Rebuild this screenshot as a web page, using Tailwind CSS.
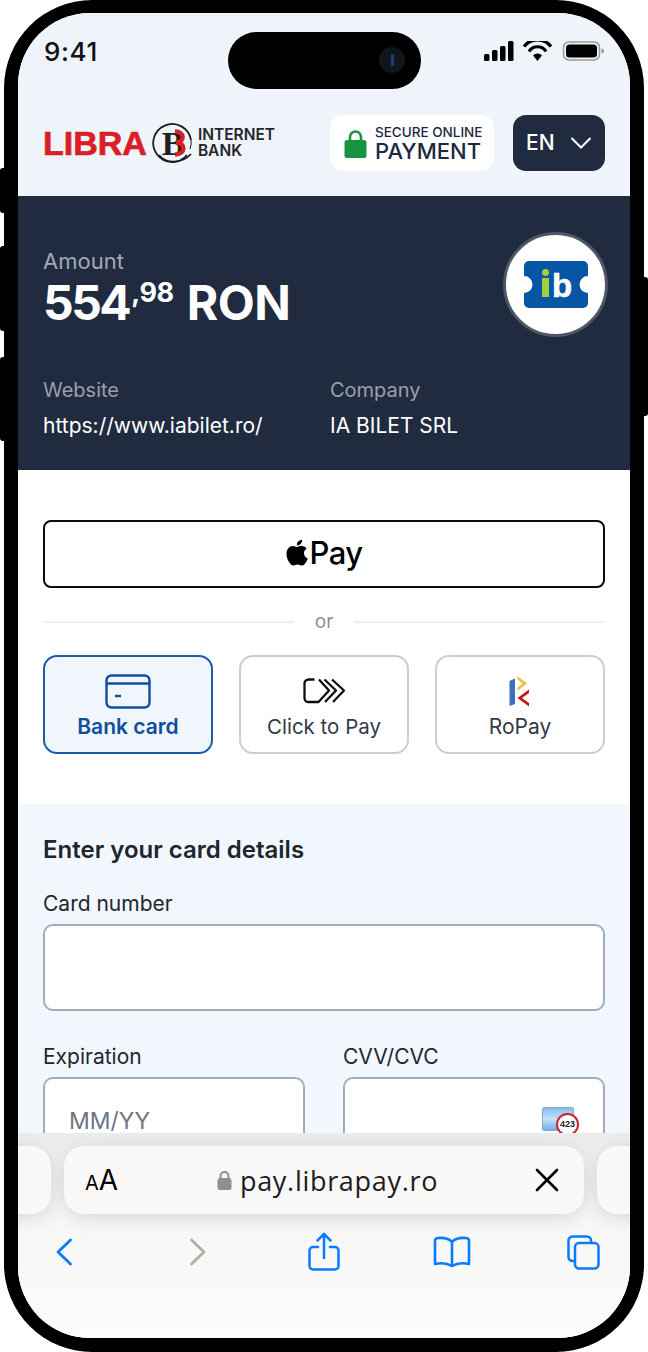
<!DOCTYPE html>
<html lang="en">
<head>
  <meta charset="UTF-8" />
  <meta name="viewport" content="width=device-width, initial-scale=1.0">
  <title>Libra Pay</title>
  <script src="https://cdn.jsdelivr.net/npm/@tailwindcss/browser@4"></script>
</head>
<body class="bg-white font-['Inter',sans-serif]">
  <div class="relative w-[648px] h-[1352px] overflow-hidden bg-white">
    <!-- side buttons -->
    <div class="absolute left-0 top-[168px] w-[6px] h-[45px] bg-black rounded-l-[3px]"></div>
    <div class="absolute left-0 top-[246px] w-[6px] h-[85px] bg-black rounded-l-[3px]"></div>
    <div class="absolute left-0 top-[357px] w-[6px] h-[84px] bg-black rounded-l-[3px]"></div>
    <div class="absolute right-0 top-[277px] w-[6px] h-[139px] bg-black rounded-r-[3px]"></div>

    <!-- phone body -->
    <div class="absolute left-[4px] top-0 w-[640px] h-[1352px] bg-black rounded-[88px] pt-[13px] px-[14px]">
      <div class="relative w-[612px] h-[1325px] overflow-hidden rounded-[72px] bg-white">

        <!-- header -->
        <header class="h-[183px] bg-[#eff3fa] pt-[102px] pl-[25px] pr-[25px] flex items-start justify-between">
          <div class="flex items-center h-[56px]">
            <span class="font-['Liberation_Sans',sans-serif] font-bold text-[34px] leading-none text-[#d81f26] [-webkit-text-stroke:0.7px_#d81f26]">LIBRA</span>
            <svg class="ml-[5px]" width="42" height="42" viewBox="0 0 42 42">
              <path d="M35 33A19 19 0 1 1 39 18" fill="none" stroke="#1b1b1d" stroke-width="1.800"/>
              <path d="M39 18A19 19 0 0 1 38 27" fill="none" stroke="#1b1b1d" stroke-width="1"/>
              <path d="M7 33C14 42 30 42 39 32" fill="none" stroke="#1b1b1d" stroke-width="1.600"/>
              <text x="21" y="33" text-anchor="middle" font-family="Liberation Serif" font-weight="700" font-size="34" fill="#1f1f21">B</text>
              <path d="M23 9.500C33 9.500 33 20 24 20.500C34 21 34 32 23 32.500" fill="none" stroke="#d81f26" stroke-width="4.500"/>
            </svg>
            <div class="ml-[4px] text-[15.5px] leading-[16px] font-semibold text-[#26262a]">INTERNET<br>BANK</div>
          </div>
          <div class="flex items-center gap-[19px]">
            <div class="w-[164px] h-[56px] rounded-[13px] bg-white flex items-center pl-[14px]">
              <svg width="23" height="29" viewBox="0 0 23 29">
                <path d="M6 14V8a5.500 5.500 0 0 1 11 0v6" fill="none" stroke="#18933f" stroke-width="2.600"/>
                <rect x="0.500" y="11" width="22" height="18" rx="2.500" fill="#18933f"/>
              </svg>
              <div class="ml-[8px] text-[#1d2940]">
                <div class="text-[13.5px] leading-[15px] font-medium whitespace-nowrap">SECURE ONLINE</div>
                <div class="text-[22px] leading-[22px] font-medium whitespace-nowrap">PAYMENT</div>
              </div>
            </div>
            <div class="w-[92px] h-[56px] rounded-[13px] bg-[#212b3f] flex items-center pl-[13px] text-white">
              <span class="text-[21px] font-medium">EN</span>
              <svg class="ml-[15px]" width="22" height="14" viewBox="0 0 22 14"><path d="M1.500 2 L11 11.500 L20.500 2" fill="none" stroke="#fff" stroke-width="2"/></svg>
            </div>
          </div>
        </header>

        <!-- amount -->
        <section class="relative h-[274px] bg-[#212b3f] pl-[25px] pt-[52px]">
          <div class="text-[22px] leading-[26px] text-[#a3a8b3]">Amount</div>
          <div class="flex items-start text-white font-bold h-[60px] mt-[1px]">
            <span class="text-[48px] leading-[56px] tracking-[-2.500px]">554</span>
            <span class="text-[27px] leading-[28px] mt-[4px] ml-[2px] tracking-[-0.5px]">,98</span>
            <span class="text-[48px] leading-[56px] ml-[13px] tracking-[-0.5px]">RON</span>
          </div>
          <div class="absolute left-[485px] top-[36px] w-[105px] h-[105px] rounded-full bg-white border-[3px] border-[#4f5666] flex items-center justify-center">
            <svg width="64" height="47" viewBox="0 0 64 47">
              <path d="M5 0H59a5 5 0 0 1 5 5V15a8.500 8.500 0 0 0 0 17V42a5 5 0 0 1-5 5H5a5 5 0 0 1-5-5V32a8.500 8.500 0 0 0 0-17V5a5 5 0 0 1 5-5Z" fill="#0756a6"/>
              <circle cx="21.500" cy="11.500" r="3.500" fill="#a6ce39"/>
              <rect x="18" y="17" width="7" height="19" fill="#a6ce39"/>
              <text x="28" y="36" font-family="Liberation Sans" font-weight="700" font-size="33" fill="#fff" stroke="#fff" stroke-width="0.600">b</text>
            </svg>
          </div>
          <div class="grid grid-cols-[287px_1fr] mt-[41px]">
            <div>
              <div class="text-[20px] leading-[28px] text-[#9a9fab]">Website</div>
              <div class="text-[21px] leading-[28px] text-white mt-[8px]">https://www.iabilet.ro/</div>
            </div>
            <div>
              <div class="text-[20px] leading-[28px] text-[#9a9fab]">Company</div>
              <div class="text-[21px] leading-[28px] text-white mt-[8px]">IA BILET SRL</div>
            </div>
          </div>
        </section>

        <!-- payment methods -->
        <section class="h-[334px] bg-white px-[25px] pt-[50px]">
          <div class="h-[68px] rounded-[8px] border-2 border-[#0b0b0f] flex items-center justify-center pb-[3px]">
            <svg width="23" height="29" viewBox="0 0 24 30" class="mr-[1px]">
              <path d="M19.800 15.900c0-3.400 2.800-5 2.900-5.100-1.600-2.300-4-2.600-4.900-2.700-2.100-.2-4.100 1.200-5.100 1.200-1.100 0-2.700-1.200-4.400-1.200-2.300 0-4.400 1.300-5.600 3.400-2.400 4.100-.6 10.200 1.700 13.600 1.100 1.600 2.500 3.500 4.300 3.400 1.700-.1 2.400-1.100 4.500-1.100s2.700 1.100 4.500 1.100c1.900 0 3-1.700 4.200-3.300 1.300-1.900 1.800-3.700 1.900-3.800-.1 0-3.900-1.500-4-5.500z" fill="#000"/>
              <path d="M16.400 5.900c.9-1.100 1.600-2.700 1.400-4.300-1.400.1-3 .9-4 2-.9 1-1.600 2.600-1.400 4.100 1.500.1 3.100-.7 4-1.800z" fill="#000"/>
            </svg>
            <span class="text-[31px] leading-none font-medium text-black tracking-[-0.5px]">Pay</span>
          </div>
          <div class="flex items-center gap-[21px] h-[28px] mt-[20px]">
            <div class="flex-1 h-[2px] bg-[#ebeef2]"></div>
            <span class="text-[19px] text-[#8d929b] pt-[1px]">or</span>
            <div class="flex-1 h-[2px] bg-[#ebeef2]"></div>
          </div>
          <div class="grid grid-cols-3 gap-[26px] mt-[19px]">
            <div class="h-[99px] rounded-[14px] border-2 border-[#1f5ba6] bg-[#f1f6fd] flex flex-col items-center pt-[17px]">
              <svg width="46" height="35" viewBox="0 0 46 35" fill="none" stroke="#0c4f9c" stroke-width="2.400">
                <rect x="1.500" y="1.500" width="43" height="32" rx="5"/>
                <path d="M1.500 9.500H44.500"/>
                <path d="M10 22H16"/>
              </svg>
              <span class="text-[21px] leading-[26px] font-semibold text-[#0c4f9c] mt-[5px]">Bank card</span>
            </div>
            <div class="h-[99px] rounded-[14px] border-2 border-[#c9ced8] bg-white flex flex-col items-center pt-[21px]">
              <svg width="43" height="26" viewBox="0 0 43 26" fill="none" stroke="#0e0e10" stroke-width="2.300" stroke-linejoin="round">
                <path d="M11.500 1.500H5.500a4 4 0 0 0-4 4V20a4 4 0 0 0 4 4H15.500L26 12.500L16 1.500"/>
                <path d="M21.500 1.500L33 12.500L22 24"/>
                <path d="M29 1.500L41 12.500L30 24"/>
              </svg>
              <span class="text-[20.5px] leading-[26px] text-[#333a47] mt-[10px]">Click to Pay</span>
            </div>
            <div class="h-[99px] rounded-[14px] border-2 border-[#c9ced8] bg-white flex flex-col items-center pt-[19px]">
              <svg width="22" height="31" viewBox="0 0 22 31">
                <path d="M0.500 5L6 2.500V28L0.500 30Z" fill="#3c6fb6"/>
                <path d="M8.500 0L18 7.500L8.500 15L8.500 11.500L13.500 7.500L8.500 3.500Z" fill="#efbf3e"/>
                <path d="M20 13.500V17L13 22L20 27V30.500L8.500 22Z" fill="#c4190f"/>
              </svg>
              <span class="text-[21px] leading-[26px] text-[#333a47] mt-[7px]">RoPay</span>
            </div>
          </div>
        </section>

        <!-- card form -->
        <section class="h-[534px] bg-[#f2f6fd] px-[25px] pt-[32px]">
          <h2 class="text-[24px] leading-[28px] font-semibold text-[#1f252d]">Enter your card details</h2>
          <label class="block text-[21px] leading-[26px] text-[#22262e] mt-[27px]">Card number</label>
          <div class="h-[87px] rounded-[10px] border-2 border-[#a3adba] bg-white mt-[7px]"></div>
          <div class="grid grid-cols-[262px_262px] gap-[38px] mt-[33px]">
            <div>
              <label class="block text-[21px] leading-[26px] text-[#22262e]">Expiration</label>
              <div class="h-[87px] rounded-[10px] border-2 border-[#a3adba] bg-white mt-[7px] pl-[24px] pt-[27px] text-[23px] leading-[30px] text-[#6b7585]">MM/YY</div>
            </div>
            <div>
              <label class="block text-[21px] leading-[26px] text-[#22262e]">CVV/CVC</label>
              <div class="relative h-[87px] rounded-[10px] border-2 border-[#a3adba] bg-white mt-[7px]">
                <div class="absolute left-[197px] top-[28px] w-[32px] h-[24px] rounded-[2px] border border-[#8fa6bd] bg-gradient-to-b from-[#7fc0f0] via-[#c5e2f7] to-[#6ab0e8]"></div>
                <div class="absolute left-[211px] top-[34px] w-[23px] h-[23px] rounded-full border-2 border-[#c9252c] bg-white flex items-center justify-center text-[9px] font-bold text-[#222] font-['Liberation_Sans',sans-serif]">423</div>
              </div>
            </div>
          </div>
        </section>

        <!-- status bar -->
        <div class="absolute left-[26px] top-[23px] text-[26px] leading-[32px] font-medium text-[#111] tracking-[0.6px]">9:41</div>
        <div class="absolute left-[210px] top-[19px] w-[193px] h-[57px] rounded-full bg-black">
          <div class="absolute left-[151px] top-[15px] w-[26px] h-[26px] rounded-full bg-[#10151d] flex items-center justify-center">
            <div class="w-[3px] h-[12px] bg-[#1d3f6e]"></div>
          </div>
        </div>
        <svg class="absolute left-[466px] top-[28px]" width="120" height="20" viewBox="0 0 120 20">
          <rect x="0" y="13" width="5.500" height="7" rx="1.500" fill="#000"/>
          <rect x="8" y="9" width="5.500" height="11" rx="1.500" fill="#000"/>
          <rect x="16" y="5" width="5.500" height="15" rx="1.500" fill="#000"/>
          <rect x="24" y="0" width="5.500" height="20" rx="1.500" fill="#000"/>
          <path d="M40 5.500a17 17 0 0 1 27 0" fill="none" stroke="#000" stroke-width="3.200"/>
          <path d="M45 10.500a10 10 0 0 1 17 0" fill="none" stroke="#000" stroke-width="3.200"/>
          <path d="M49 14.500a6 6 0 0 1 9 0L53.500 20Z" fill="#000"/>
          <rect x="79.500" y="1" width="36" height="18" rx="5.500" fill="none" stroke="#9a9a9a" stroke-width="1.500"/>
          <rect x="82" y="3.500" width="31" height="13" rx="3.500" fill="#000"/>
          <path d="M117.500 7.500a2.500 2.500 0 0 1 0 5Z" fill="#9a9a9a"/>
        </svg>

        <!-- safari toolbar -->
        <div class="absolute left-0 bottom-0 w-[612px] h-[205px] bg-gradient-to-b from-[#ebebeb] via-[#f6f6f5] via-40% to-[#fcfcfc]">
          <div class="flex gap-[13px] h-[68px] mt-[13px] -ml-[487px] w-[1099px]">
            <div class="w-[520px] shrink-0 rounded-[20px] bg-[#f9f8f6] shadow-[0_4px_18px_rgba(0,0,0,0.12)]"></div>
            <div class="w-[520px] shrink-0 rounded-[20px] bg-[#f9f8f6] shadow-[0_4px_18px_rgba(0,0,0,0.12)] flex items-center pl-[21px] pr-[25px]">
              <span class="text-black leading-none"><span class="text-[20px]">A</span><span class="text-[28px]">A</span></span>
              <div class="flex-1 flex items-center justify-center pl-[2px]">
                <svg width="15" height="20" viewBox="0 0 15 20"><path d="M3.500 9V6a4 4 0 0 1 8 0v3" fill="none" stroke="#8e8e93" stroke-width="2"/><rect x="0.500" y="8" width="14" height="12" rx="2.500" fill="#8e8e93"/></svg>
                <span class="ml-[8px] text-[27px] leading-none text-[#1c1c1e] tracking-[0.7px] font-['Open_Sans',sans-serif]">pay.librapay.ro</span>
              </div>
              <svg width="24" height="24" viewBox="0 0 24 24"><path d="M2 2L22 22M22 2L2 22" stroke="#000" stroke-width="2.600" stroke-linecap="round"/></svg>
            </div>
            <div class="w-[520px] shrink-0 rounded-[20px] bg-[#f9f8f6] shadow-[0_4px_18px_rgba(0,0,0,0.12)]"></div>
          </div>
          <div class="flex items-center h-[40px] mt-[18px] pl-[37px]">
            <svg width="18" height="28" viewBox="0 0 18 28"><path d="M15.500 2L3 14L15.500 26" fill="none" stroke="#0a7aff" stroke-width="2.800" stroke-linecap="round" stroke-linejoin="round"/></svg>
            <svg class="ml-[116px]" width="18" height="28" viewBox="0 0 18 28"><path d="M2.500 2L15 14L2.500 26" fill="none" stroke="#b3aea8" stroke-width="2.800" stroke-linecap="round" stroke-linejoin="round"/></svg>
            <svg class="ml-[101px]" width="32" height="40" viewBox="0 0 32 40" fill="none" stroke="#0a7aff" stroke-width="2.500" stroke-linecap="round" stroke-linejoin="round"><path d="M10 15H5a3.500 3.500 0 0 0-3.500 3.500V34A3.500 3.500 0 0 0 5 37.500H27a3.500 3.500 0 0 0 3.500-3.500V18.500A3.500 3.500 0 0 0 27 15H22"/><path d="M16 26V2"/><path d="M9.500 8.500L16 2L22.500 8.500"/></svg>
            <svg class="ml-[93px]" width="38" height="32" viewBox="0 0 38 32" fill="none" stroke="#0a7aff" stroke-width="2.600" stroke-linecap="round" stroke-linejoin="round"><path d="M19 6C16 2.500 11 1.500 5 2C3 2.200 2 3.500 2 5V28C7 27 14 27 19 30C24 27 31 27 36 28V5C36 3.500 35 2.200 33 2C27 1.500 22 2.500 19 6Z"/><path d="M19 6V30"/></svg>
            <svg class="ml-[96px]" width="33" height="35" viewBox="0 0 33 35" fill="none" stroke="#0a7aff" stroke-width="2.500" stroke-linejoin="round"><path d="M7 26H5.500a4 4 0 0 1-4-4V5.500a4 4 0 0 1 4-4H20a4 4 0 0 1 4 4V7"/><rect x="8" y="8" width="23.500" height="25.500" rx="4"/></svg>
          </div>
        </div>
      </div>
    </div>
  </div>
</body>
</html>
